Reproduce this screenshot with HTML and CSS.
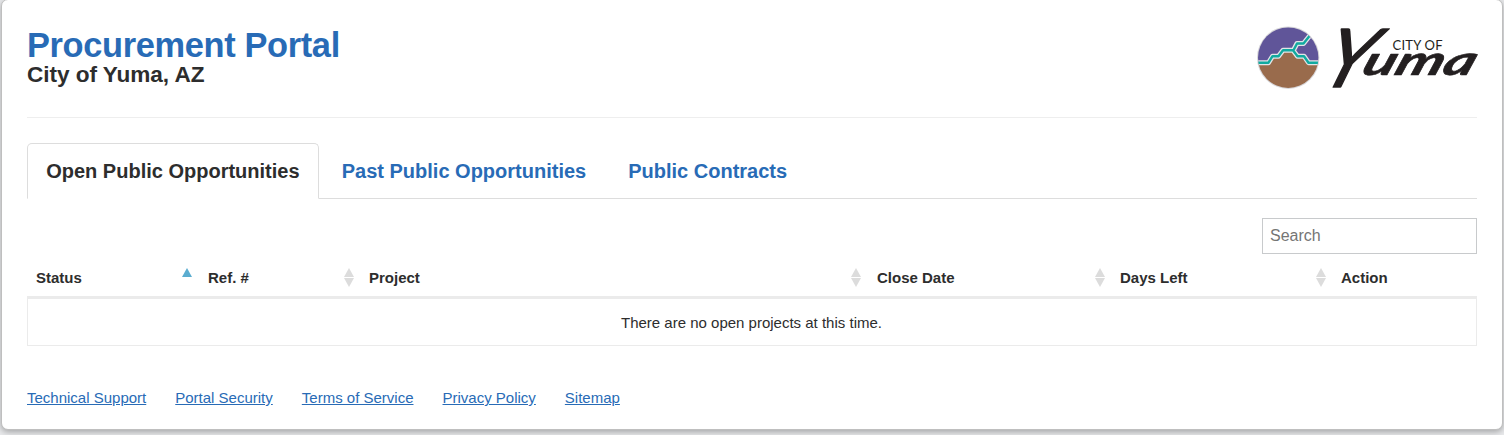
FILE: index.html
```html
<!DOCTYPE html>
<html lang="en">
<head>
<meta charset="utf-8">
<title>Procurement Portal</title>
<link rel="stylesheet" href="styles.css">
</head>
<body>
<main class="card">
  <header class="header">
    <div>
      <h1 class="title">Procurement Portal</h1>
      <h2 class="subtitle">City of Yuma, AZ</h2>
    </div>
    <svg class="logo" width="222" height="66" viewBox="1256 25 222 66" role="img" aria-label="City of Yuma">
      <clipPath id="disc"><circle cx="1288.2" cy="57.7" r="30.2"/></clipPath>
      <circle cx="1288.2" cy="57.7" r="31.2" fill="#d8d7da"/>
      <g clip-path="url(#disc)">
        <path fill="#605599" d="M1256 25h65v38h-65z"/>
        <path fill="#996b4c" d="M1256 62.7H1269L1273 57H1279L1283 51H1293L1298 57H1304L1308 62.7H1321V91H1256z"/>
        <g fill="none" stroke-linejoin="round">
          <path stroke="#e2e5e8" stroke-width="5" d="M1256 62.7H1268.5L1272.5 56.2H1278.5L1283 50.2H1293L1297.5 56.2H1304L1308.5 62.7H1321M1293.5 50.2L1297 43.5H1303.5L1309.5 36"/>
          <path stroke="#12aaa0" stroke-width="2.4" d="M1256 62.7H1268.5L1272.5 56.2H1278.5L1283 50.2H1293L1297.5 56.2H1304L1308.5 62.7H1321M1293.5 50.2L1297 43.5H1303.5L1309.5 36"/>
        </g>
      </g>
      <text class="logo-small" x="1392.5" y="49.5" textLength="50">CITY OF</text>
      <text class="logo-initial" transform="translate(1313 87) skewX(-26)" textLength="48" lengthAdjust="spacingAndGlyphs">Y</text>
      <text class="logo-script" transform="translate(1360 75) skewX(-20)" textLength="112" lengthAdjust="spacingAndGlyphs">uma</text>
    </svg>
  </header>
  <nav class="tabs">
    <a class="tab active">Open Public Opportunities</a>
    <a class="tab">Past Public Opportunities</a>
    <a class="tab">Public Contracts</a>
  </nav>
  <div class="search-row"><input class="search" type="text" placeholder="Search"></div>
  <table class="projects">
    <colgroup><col class="c-status"><col class="c-ref"><col class="c-project"><col class="c-close"><col class="c-days"><col class="c-action"></colgroup>
    <thead>
      <tr>
        <th class="tight"><div class="head">Status<span class="sort asc"></span></div></th>
        <th><div class="head">Ref. #<span class="sort"></span></div></th>
        <th class="tight"><div class="head">Project<span class="sort"></span></div></th>
        <th><div class="head">Close Date<span class="sort"></span></div></th>
        <th><div class="head">Days Left<span class="sort"></span></div></th>
        <th><div class="head">Action</div></th>
      </tr>
    </thead>
    <tbody><tr><td colspan="6">There are no open projects at this time.</td></tr></tbody>
  </table>
  <footer class="links">
    <a href="#">Technical Support</a>
    <a href="#">Portal Security</a>
    <a href="#">Terms of Service</a>
    <a href="#">Privacy Policy</a>
    <a href="#">Sitemap</a>
  </footer>
</main>
</body>
</html>
```
FILE: styles.css
```css
* { box-sizing: border-box; }
body {
  margin: 0;
  height: 435px;
  overflow: hidden;
  background: #e9eaec;
  color: #2d2d2d;
  font: 15px/20px "Liberation Sans", Arial, sans-serif;
}
.card {
  height: 431px;
  margin: -1px 1px 0;
  padding: 0 25px;
  border: 1px solid #bfbfbf;
  border-radius: 7px;
  background: #fff;
  box-shadow: 0 2px 6px rgba(0, 0, 0, .3);
}
.header {
  display: flex;
  justify-content: space-between;
  height: 118px;
  padding-top: 25px;
  border-bottom: 1px solid #eee;
}
.title, .subtitle { margin: 0; font-weight: 700; }
.title { padding-top: 2px; color: #286bb6; font-size: 34.4px; line-height: 36px; letter-spacing: -.35px; }
.subtitle { font-size: 22.6px; line-height: 24px; letter-spacing: -.05px; }
.logo { margin-right: -1px; overflow: visible; }
.logo-small { fill: #231f20; font: 13px Lato, sans-serif; }
.logo-script, .logo-initial { fill: #231f20; stroke: #231f20; stroke-linejoin: round; }
.logo-script { stroke-width: .6px; font: italic 700 41px Lato, sans-serif; }
.logo-initial { stroke-width: 1.5px; font: 400 81px Lato, sans-serif; }
.tabs {
  display: flex;
  gap: 4px;
  height: 56px;
  margin-top: 25px;
  border-bottom: 1px solid #ddd;
}
.tab {
  height: 56px;
  padding: 17px 18px;
  border: 1px solid transparent;
  border-radius: 5px 5px 0 0;
  color: #286bb6;
  font-size: 20px;
  font-weight: 700;
  line-height: 20px;
}
.active { padding: 17px 18.2px; border-color: #ddd #ddd #fff; background: #fff; color: #2d2d2d; }
.search-row { display: flex; justify-content: flex-end; margin-top: 19px; }
.search {
  width: 215px;
  height: 36px;
  padding: 0 7px;
  border: 1px solid #c8cacc;
  background: #fff;
  font: 16px "Liberation Sans", Arial, sans-serif;
}
.search::placeholder { color: #757575; }
.projects {
  width: 100%;
  margin-top: 4px;
  border-collapse: separate;
  border-spacing: 0;
  table-layout: fixed;
}
.c-status { width: 172px; }
.c-ref { width: 161px; }
.c-project { width: 508px; }
.c-close { width: 243px; }
.c-days { width: 221px; }
th { height: 41px; padding: 2px 6px 0 9px; border-bottom: 3px solid #ebebeb; text-align: left; }
th.tight { padding-right: 7px; }
.head { display: flex; align-items: center; justify-content: space-between; }
.sort {
  display: flex;
  flex-direction: column;
  gap: 1px;
  height: 19px;
  margin-bottom: 1px;
}
.sort::before, .sort::after { content: ""; border: 5.5px solid transparent; }
.sort::before { border-top: 0; border-bottom: 9px solid #dcdcdc; }
.sort::after { border-bottom: 0; border-top: 9px solid #dcdcdc; }
.asc::before { border-bottom-color: #5badd0; }
.asc::after { visibility: hidden; }
td {
  height: 47px;
  padding: 1px 1px 0 0;
  border: solid #ebebeb;
  border-width: 0 1px 1px;
  text-align: center;
}
.links { display: flex; gap: 29px; margin-top: 42px; }
.links a { color: #286bb6; text-decoration: underline; }
```
